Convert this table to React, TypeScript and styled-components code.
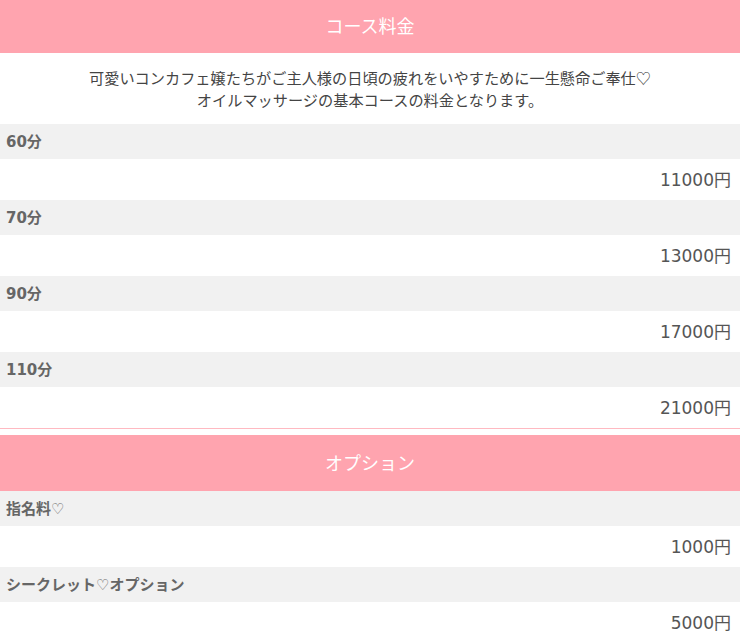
import React from 'react';
import styled, { createGlobalStyle } from 'styled-components';

const GlobalStyle = createGlobalStyle`
  body {
    margin: 0;
    background: #ffffff;
    font-family: "DejaVu Sans", "Noto Sans CJK JP", sans-serif;
    color: #555555;
  }
`;

interface PriceItem {
  label: string;
  price: string;
}

const courses: PriceItem[] = [
  { label: '60分', price: '11000円' },
  { label: '70分', price: '13000円' },
  { label: '90分', price: '17000円' },
  { label: '110分', price: '21000円' },
];

const options: PriceItem[] = [
  { label: '指名料♡', price: '1000円' },
  { label: 'シークレット♡オプション', price: '5000円' },
];

const Page = styled.div`
  width: 740px;
`;

const Section = styled.section<{ $divider?: boolean }>`
  border-bottom: ${({ $divider }) => ($divider ? '1px solid #ffb9c1' : 'none')};
  margin-bottom: ${({ $divider }) => ($divider ? '6px' : '0')};
`;

const Header = styled.h2<{ $height: number }>`
  margin: 0;
  height: ${({ $height }) => $height}px;
  padding-bottom: 3px;
  box-sizing: border-box;
  display: flex;
  align-items: center;
  justify-content: center;
  background: #ffa4af;
  color: #ffffff;
  font-family: "Noto Sans CJK JP", sans-serif;
  font-size: 18px;
  font-weight: 400;
`;

const Intro = styled.p`
  margin: 0;
  padding: 13px 0 14px;
  text-align: center;
  font-family: "Noto Sans CJK JP", sans-serif;
  font-size: 15.2px;
  line-height: 22px;
  color: #444444;
`;

const List = styled.dl`
  margin: 0;
`;

const Label = styled.dt`
  height: 35px;
  display: flex;
  align-items: center;
  padding: 0 6px 2px;
  box-sizing: border-box;
  background: #f1f1f1;
  font-family: "DejaVu Sans", "Noto Sans CJK JP", sans-serif;
  font-size: 15px;
  font-weight: 700;
  color: #666666;
`;

const Price = styled.dd`
  margin: 0;
  height: 41px;
  display: flex;
  align-items: center;
  justify-content: flex-end;
  padding: 0 9px 3px;
  box-sizing: border-box;
  background: #ffffff;
  font-family: "DejaVu Sans", "Noto Sans CJK JP", sans-serif;
  font-size: 17px;
  color: #555555;
`;

const PriceTable: React.FC<{ items: PriceItem[] }> = ({ items }) => (
  <List>
    {items.map((item) => (
      <React.Fragment key={item.label}>
        <Label>{item.label}</Label>
        <Price>{item.price}</Price>
      </React.Fragment>
    ))}
  </List>
);

const App: React.FC = () => {
  return (
    <Page>
      <GlobalStyle />
      <Section $divider>
        <Header $height={53}>コース料金</Header>
        <Intro>
          可愛いコンカフェ嬢たちがご主人様の日頃の疲れをいやすために一生懸命ご奉仕♡
          <br />
          オイルマッサージの基本コースの料金となります。
        </Intro>
        <PriceTable items={courses} />
      </Section>
      <Section>
        <Header $height={56}>オプション</Header>
        <PriceTable items={options} />
      </Section>
    </Page>
  );
};

export default App;
